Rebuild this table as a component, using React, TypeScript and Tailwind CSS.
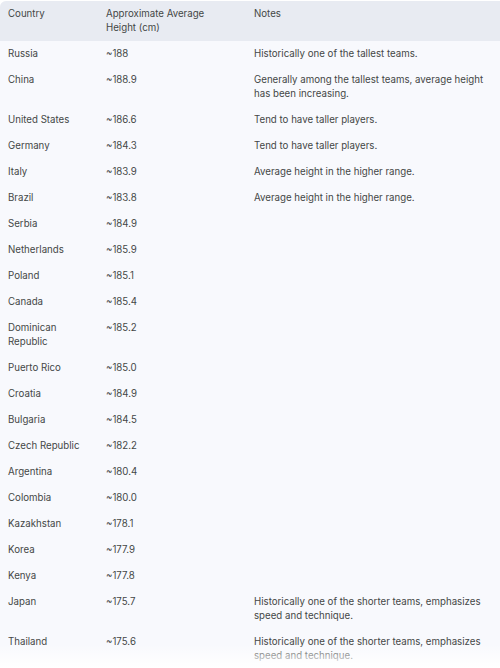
const rows: [string, string, string][] = [
  ["Russia", "~188", "Historically one of the tallest teams."],
  ["China", "~188.9", "Generally among the tallest teams, average height has been increasing."],
  ["United States", "~186.6", "Tend to have taller players."],
  ["Germany", "~184.3", "Tend to have taller players."],
  ["Italy", "~183.9", "Average height in the higher range."],
  ["Brazil", "~183.8", "Average height in the higher range."],
  ["Serbia", "~184.9", ""],
  ["Netherlands", "~185.9", ""],
  ["Poland", "~185.1", ""],
  ["Canada", "~185.4", ""],
  ["Dominican Republic", "~185.2", ""],
  ["Puerto Rico", "~185.0", ""],
  ["Croatia", "~184.9", ""],
  ["Bulgaria", "~184.5", ""],
  ["Czech Republic", "~182.2", ""],
  ["Argentina", "~180.4", ""],
  ["Colombia", "~180.0", ""],
  ["Kazakhstan", "~178.1", ""],
  ["Korea", "~177.9", ""],
  ["Kenya", "~177.8", ""],
  ["Japan", "~175.7", "Historically one of the shorter teams, emphasizes speed and technique."],
  ["Thailand", "~175.6", "Historically one of the shorter teams, emphasizes speed and technique."],
];

export default function App() {
  return (
    <div className="relative h-[668px] w-[500px] overflow-hidden bg-white pt-px font-['Inter',sans-serif] text-[9.7px] leading-[14px] text-[#444746]">
      <table className="w-full table-fixed border-collapse overflow-hidden rounded-tl-md bg-[#f8f9fd]">
        <colgroup>
          <col className="w-[98px]" />
          <col className="w-[148px]" />
          <col />
        </colgroup>
        <thead className="bg-[#e8ebf2] text-left">
          <tr>
            <th className="h-[40px] px-2 py-[6px] align-top font-normal">Country</th>
            <th className="py-[6px] pr-[36px] pl-2 align-top font-normal">Approximate Average Height (cm)</th>
            <th className="py-[6px] pr-2 pl-2 align-top font-normal">Notes</th>
          </tr>
        </thead>
        <tbody>
          {rows.map(([country, height, notes]) => (
            <tr key={country}>
              <td className="px-2 py-[6px] align-top">{country}</td>
              <td className="px-2 py-[6px] align-top">{height}</td>
              <td className="py-[6px] pr-2 pl-2 align-top">{notes}</td>
            </tr>
          ))}
        </tbody>
      </table>
      <div className="pointer-events-none absolute right-0 bottom-0 left-0 h-[24px] bg-gradient-to-b from-white/0 to-white" />
    </div>
  );
}
